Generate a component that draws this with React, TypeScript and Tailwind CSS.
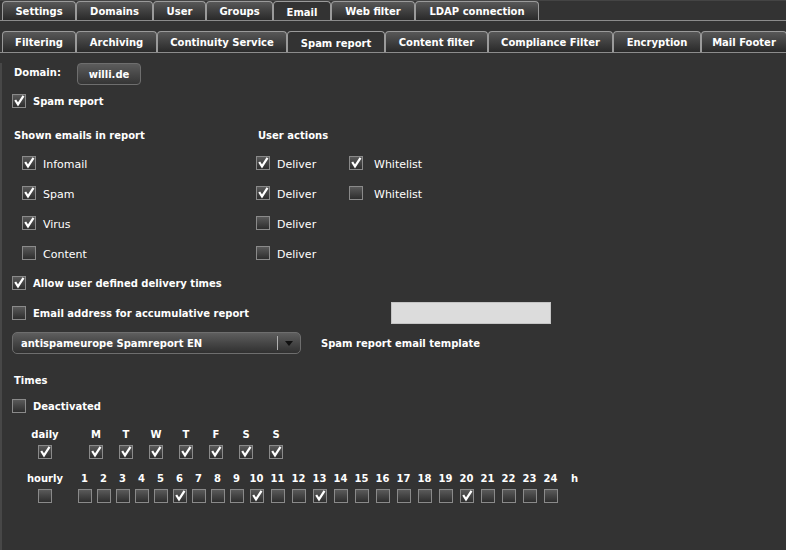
import React from 'react'

const topTabs: [string, number, boolean?][] = [
  ['Settings', 74],
  ['Domains', 77],
  ['User', 53],
  ['Groups', 67],
  ['Email', 58, true],
  ['Web filter', 84],
  ['LDAP connection', 124],
]

const subTabs: [string, number, boolean?][] = [
  ['Filtering', 74],
  ['Archiving', 81],
  ['Continuity Service', 130],
  ['Spam report', 98, true],
  ['Content filter', 103],
  ['Compliance Filter', 125],
  ['Encryption', 88],
  ['Mail Footer', 86],
]

const days = ['M', 'T', 'W', 'T', 'F', 'S', 'S']
const hoursOn = [6, 10, 13, 20]

function Box({ checked }: { checked?: boolean }) {
  return (
    <span className="flex h-[14px] w-[14px] shrink-0 border border-[#8a8a8a] bg-linear-to-b from-[#5a5a5a] to-[#2e2e2e]">
      {checked && (
        <svg viewBox="0 0 12 12" className="h-[12px] w-[12px]">
          <path d="M2.2 5 L5 9.4 L10.5 0.9" fill="none" stroke="#fff" strokeWidth="2.2" strokeLinejoin="miter" />
        </svg>
      )}
    </span>
  )
}

function Tab({ label, w, active }: { label: string; w: number; active?: boolean }) {
  return (
    <div
      style={{ width: w }}
      className={
        'flex h-full shrink-0 items-center justify-center rounded-t-[4px] border border-b-0 border-[#9a9a9a] text-[10px] font-bold leading-none text-white ' +
        (active ? 'bg-[#333333] pt-[3px]' : 'bg-linear-to-b from-[#585858] to-[#2a2a2a] pt-[1px]')
      }
    >
      {label}
    </div>
  )
}

function Check({ checked, label, bold, gap = 'gap-[7px]' }: { checked?: boolean; label: string; bold?: boolean; gap?: string }) {
  return (
    <div className={'flex items-center ' + gap}>
      <Box checked={checked} />
      <span className={'pt-[2px] ' + (bold ? 'text-[10px] font-bold' : 'text-[11px]')}>{label}</span>
    </div>
  )
}

export default function App() {
  const shown = [
    { label: 'Infomail', on: true, deliver: true, white: true },
    { label: 'Spam', on: true, deliver: true, white: false },
    { label: 'Virus', on: true, deliver: false },
    { label: 'Content', on: false, deliver: false },
  ]

  return (
    <div className="h-[550px] w-[786px] overflow-hidden bg-[#333333] font-['DejaVu_Sans',sans-serif] text-white">
      {/* main tabs */}
      <div className="flex h-[21px] items-end border-b border-t border-t-[#444] border-b-[#8c8c8c] pl-[2px]">
        <div className="flex h-[19px]">
          {topTabs.map(([l, w, a]) => (
            <Tab key={l} label={l} w={w} active={a} />
          ))}
        </div>
      </div>

      {/* email sub tabs */}
      <div className="mt-[10px] flex h-[22px] overflow-hidden border-b border-[#8c8c8c] pl-[2px]">
        {subTabs.map(([l, w, a]) => (
          <Tab key={l} label={l} w={w} active={a} />
        ))}
      </div>

      <div className="h-[497px] border-l-2 border-[#474747] pl-[10px] leading-none">
        {/* domain */}
        <div className="mt-[10px] flex h-[22px] items-center">
          <span className="ml-[2px] w-[63px] pb-[2px] text-[10px] font-bold">Domain:</span>
          <button className="flex h-[22px] w-[64px] items-center justify-center rounded-[4px] border border-[#6e6e6e] bg-linear-to-b from-[#5c5c5c] to-[#353535] pt-[1px] text-[10px] font-bold text-white">
            willi.de
          </button>
        </div>

        <div className="mt-[1px] flex h-[30px] items-center">
          <Check checked bold label="Spam report" />
        </div>

        {/* shown emails / user actions */}
        <div className="mt-[6px] flex h-[26px] items-center pt-[2px] text-[10px] font-bold">
          <span className="w-[246px] pl-[2px]">Shown emails in report</span>
          <span>User actions</span>
        </div>
        {shown.map((r) => (
          <div key={r.label} className="flex h-[30px] items-center">
            <div className="w-[244px] pl-[10px]">
              <Check checked={r.on} label={r.label} />
            </div>
            <div className="w-[93px]">
              <Check checked={r.deliver} label="Deliver" />
            </div>
            {r.white !== undefined && <Check checked={r.white} label="Whitelist" gap="gap-[11px]" />}
          </div>
        ))}

        <div className="flex h-[30px] items-center">
          <Check checked bold label="Allow user defined delivery times" />
        </div>
        <div className="flex h-[30px] items-center">
          <div className="w-[379px]">
            <Check bold label="Email address for accumulative report" />
          </div>
          <input className="h-[22px] w-[160px] border border-[#c4c4c4] bg-[#dcdcdc] outline-none" />
        </div>
        <div className="flex h-[30px] items-center">
          <div className="flex h-[22px] w-[289px] items-center rounded-[5px] border border-[#6e6e6e] bg-linear-to-b from-[#5e5e5e] to-[#303030]">
            <span className="flex-1 pl-[8px] pt-[1px] text-[10px] font-bold">antispameurope Spamreport EN</span>
            <span className="h-[14px] w-px bg-[#b0b0b0]" />
            <svg viewBox="0 0 8 5" className="mx-[7px] h-[5px] w-[8px]">
              <path d="M0 0 H8 L4 5 Z" fill="#111" />
            </svg>
          </div>
          <span className="ml-[20px] pt-[2px] text-[10px] font-bold">Spam report email template</span>
        </div>

        {/* times */}
        <div className="mt-[11px] flex h-[22px] items-center pt-[2px]">
          <span className="ml-[2px] text-[10px] font-bold">Times</span>
        </div>
        <div className="flex h-[30px] items-center">
          <Check bold label="Deactivated" />
        </div>

        <div className="mt-[5px] flex text-[10px] font-bold">
          <div className="flex w-[66px] flex-col items-center">
            <span className="flex h-[16px] items-center pt-[2px]">daily</span>
            <div className="mt-[3px]">
              <Box checked />
            </div>
          </div>
          <div className="ml-[3px] flex">
            {days.map((d, i) => (
              <div key={i} className="flex w-[30px] flex-col items-center">
                <span className="flex h-[16px] items-center pt-[2px]">{d}</span>
                <div className="mt-[3px]">
                  <Box checked />
                </div>
              </div>
            ))}
          </div>
        </div>

        <div className="mt-[11px] flex text-[10px] font-bold">
          <div className="flex w-[66px] flex-col items-center">
            <span className="flex h-[16px] items-center pt-[2px]">hourly</span>
            <div className="mt-[3px]">
              <Box />
            </div>
          </div>
          <div className="ml-[-3px] flex">
            {Array.from({ length: 24 }, (_, i) => i + 1).map((h) => (
              <div key={h} className={'flex flex-col items-center ' + (h < 10 ? 'w-[19px]' : 'w-[21px]')}>
                <span className="flex h-[16px] items-center pt-[2px]">{h}</span>
                <div className="mt-[3px]">
                  <Box checked={hoursOn.includes(h)} />
                </div>
              </div>
            ))}
            <div className="flex w-[27px] flex-col items-center">
              <span className="flex h-[16px] items-center pt-[2px]">h</span>
            </div>
          </div>
        </div>
      </div>
    </div>
  )
}
